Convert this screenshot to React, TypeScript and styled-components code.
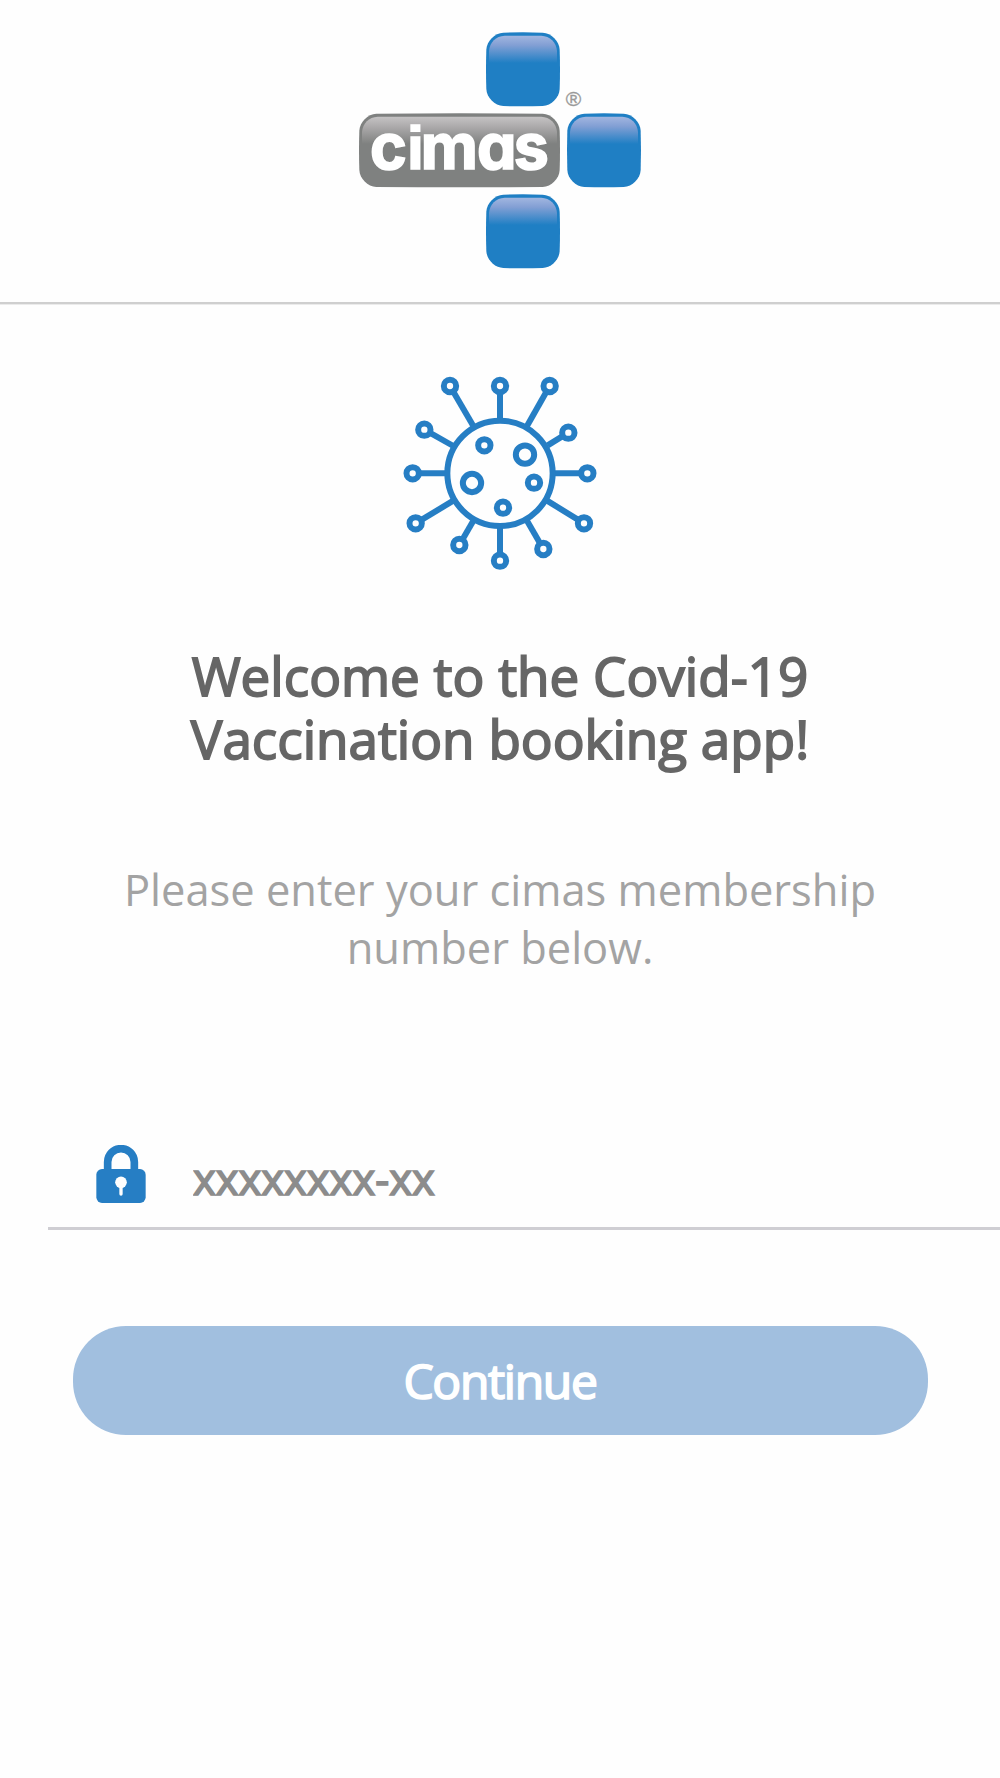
import React from "react";
import styled, { createGlobalStyle } from "styled-components";

const BLUE = "#267ec4";

const GlobalStyle = createGlobalStyle`
  * { box-sizing: border-box; }
  body {
    margin: 0;
    background: #fefefe;
    font-family: "Open Sans", "Noto Sans", sans-serif;
  }
`;

const Screen = styled.div`
  display: flex;
  flex-direction: column;
  width: 100%;
  min-height: 1778px;
`;

const Header = styled.header`
  display: flex;
  justify-content: center;
  height: 304px;
  padding-top: 20px;
  border-bottom: 2px solid #cfcfcf;
  box-shadow: 0 1px 0 #ebebeb;
`;

const LogoSvg = styled.svg`
  display: block;
  width: 300px;
  height: 260px;
`;

const Main = styled.main`
  display: flex;
  flex-direction: column;
  align-items: center;
  padding-top: 66px;
`;

const VirusSvg = styled.svg`
  display: block;
  width: 210px;
  height: 205px;
`;

const Title = styled.h1`
  margin: 69px 0 0;
  font-size: 53px;
  font-weight: 400;
  line-height: 63px;
  text-align: center;
  color: #666;
  -webkit-text-stroke: 1.8px #666;
`;

const Subtitle = styled.p`
  margin: 91px 0 0;
  font-size: 43.45px;
  line-height: 58px;
  text-align: center;
  color: #a3a3a3;
`;

const Line = styled.span`
  display: block;
  white-space: nowrap;
`;

const Field = styled.label`
  display: flex;
  align-items: flex-start;
  align-self: flex-end;
  width: 952px;
  height: 85px;
  margin-top: 168px;
  padding-left: 48px;
  border-bottom: 3px solid #cfced3;
`;

const LockSvg = styled.svg`
  display: block;
  width: 50px;
  height: 58px;
`;

const Input = styled.input`
  flex: 1;
  height: 62px;
  margin: 3px 0 0 47px;
  padding: 0;
  border: 0;
  outline: 0;
  background: transparent;
  font: 400 43.5px/62px "Open Sans", "Noto Sans", sans-serif;
  color: #666;
  &::placeholder {
    color: #8c8c8c;
    opacity: 1;
    -webkit-text-stroke: 1.6px #8c8c8c;
  }
`;

const Button = styled.button`
  width: 855px;
  height: 109px;
  margin-top: 96px;
  padding: 0;
  border: 0;
  border-radius: 53px;
  background: #a1bfdf;
  color: #fff;
  font: 400 48px/109px "Open Sans", "Noto Sans", sans-serif;
  letter-spacing: -1.3px;
  -webkit-text-stroke: 1.7px #fff;
`;

const roundedTile = (x: number, y: number, w: number, h: number) => {
  const r = 52;
  const k = 26;
  return `M${x + r} ${y + 1}Q${x + w / 2} ${y - 1} ${x + w - r} ${y + 1}
    C${x + w - k} ${y + 2} ${x + w - 2} ${y + k} ${x + w - 1} ${y + r}
    Q${x + w + 1} ${y + h / 2} ${x + w - 1} ${y + h - r}
    C${x + w - 2} ${y + h - k} ${x + w - k} ${y + h - 2} ${x + w - r} ${y + h - 1}
    Q${x + w / 2} ${y + h + 1} ${x + r} ${y + h - 1}
    C${x + k} ${y + h - 2} ${x + 2} ${y + h - k} ${x + 1} ${y + h - r}
    Q${x - 1} ${y + h / 2} ${x + 1} ${y + r}
    C${x + 2} ${y + k} ${x + k} ${y + 2} ${x + r} ${y + 1}Z`;
};

const gloss = (x: number, y: number, w: number) =>
  `M${x + 9} ${y + 92}V${y + 56}C${x + 11} ${y + 30} ${x + 30} ${y + 11} ${x + 56} ${y + 10}H${x + w - 56}C${x + w - 30} ${y + 11} ${x + w - 11} ${y + 30} ${x + w - 9} ${y + 56}V${y + 92}Z`;

const tiles = [
  { x: 408, y: 37 },
  { x: 651, y: 280 },
  { x: 408, y: 523 },
];

const Logo = () => (
  <LogoSvg viewBox="0 0 900 780" role="img" aria-label="cimas">
    <defs>
      <linearGradient id="glossBlue" x1="0" y1="0" x2="0" y2="1">
        <stop offset="0" stopColor="#a2b6e0" />
        <stop offset="0.35" stopColor="#829fd4" />
        <stop offset="1" stopColor="#1f7fc4" />
      </linearGradient>
      <linearGradient id="glossGrey" x1="0" y1="0" x2="0" y2="1">
        <stop offset="0" stopColor="#c5c3c4" />
        <stop offset="0.35" stopColor="#adabac" />
        <stop offset="1" stopColor="#7f8180" />
      </linearGradient>
    </defs>
    {tiles.map((t) => (
      <g key={`${t.x}-${t.y}`}>
        <path d={roundedTile(t.x, t.y, 222, 222)} fill="#1f7fc4" />
        <path d={gloss(t.x, t.y, 222)} fill="url(#glossBlue)" />
      </g>
    ))}
    <path d={roundedTile(27, 280, 603, 222)} fill="#7f8180" />
    <path d={gloss(27, 280, 603)} fill="url(#glossGrey)" />
    <text
      y="448"
      fill="#fff"
      fontFamily="Inter, sans-serif"
      fontSize="188"
      fontWeight="700"
      stroke="#fff"
      strokeWidth="5"
      style={{ fontFeatureSettings: '"cv11"' }}
    >
      <tspan x="60">c</tspan>
      <tspan x="171" fontFamily="Liberation Sans, sans-serif" fontSize="182">i</tspan>
      <tspan x="212">m</tspan>
      <tspan x="381">a</tspan>
      <tspan x="491">s</tspan>
    </text>
    <text x="647" y="257" fill="#999" fontFamily="Liberation Sans, sans-serif" fontSize="63" stroke="#999" strokeWidth="1">
      ®
    </text>
  </LogoSvg>
);

const spikes = [
  [165, 48, 235, 168],
  [315, 48, 315, 150],
  [464, 48, 396, 168],
  [520, 188, 458, 226],
  [577, 310, 474, 310],
  [567, 460, 456, 392],
  [445, 537, 396, 452],
  [315, 572, 315, 470],
  [193, 525, 235, 452],
  [62, 460, 175, 392],
  [53, 310, 156, 310],
  [88, 179, 175, 228],
];

const spots = [
  [268, 226, 18.5],
  [390, 254, 27.5],
  [231, 339, 27.5],
  [417, 338, 18.5],
  [324, 413, 18.5],
];

const Virus = () => (
  <VirusSvg viewBox="0 0 630 615" fill="none" stroke={BLUE} strokeWidth="18" aria-hidden="true">
    {spikes.map(([x, y, bx, by]) => (
      <line key={`l${x}-${y}`} x1={x} y1={y} x2={bx} y2={by} />
    ))}
    <circle cx="315" cy="310" r="158" />
    {spikes.map(([x, y]) => (
      <circle key={`c${x}-${y}`} cx={x} cy={y} r="18.5" fill="#fefefe" />
    ))}
    {spots.map(([x, y, r]) => (
      <circle key={`s${x}-${y}`} cx={x} cy={y} r={r} />
    ))}
  </VirusSvg>
);

const Lock = () => (
  <LockSvg viewBox="0 0 150 174" aria-hidden="true">
    <path d="M35 78V51a40 40 0 0 1 80 0v27" fill="none" stroke={BLUE} strokeWidth="23" />
    <rect x="1" y="72" width="148" height="102" rx="17" fill={BLUE} />
    <circle cx="75" cy="112" r="17.5" fill="#fefefe" />
    <path d="M75 115V147" stroke="#fefefe" strokeWidth="10" strokeLinecap="round" />
  </LockSvg>
);

export default function App() {
  return (
    <Screen>
      <GlobalStyle />
      <Header>
        <Logo />
      </Header>
      <Main>
        <Virus />
        <Title>
          <Line>Welcome to the Covid-19</Line>
          <Line>Vaccination booking app!</Line>
        </Title>
        <Subtitle>
          <Line>Please enter your cimas membership</Line>
          <Line>number below.</Line>
        </Subtitle>
        <Field>
          <Lock />
          <Input placeholder="xxxxxxxx-xx" aria-label="Membership number" />
        </Field>
        <Button type="button">Continue</Button>
      </Main>
    </Screen>
  );
}
